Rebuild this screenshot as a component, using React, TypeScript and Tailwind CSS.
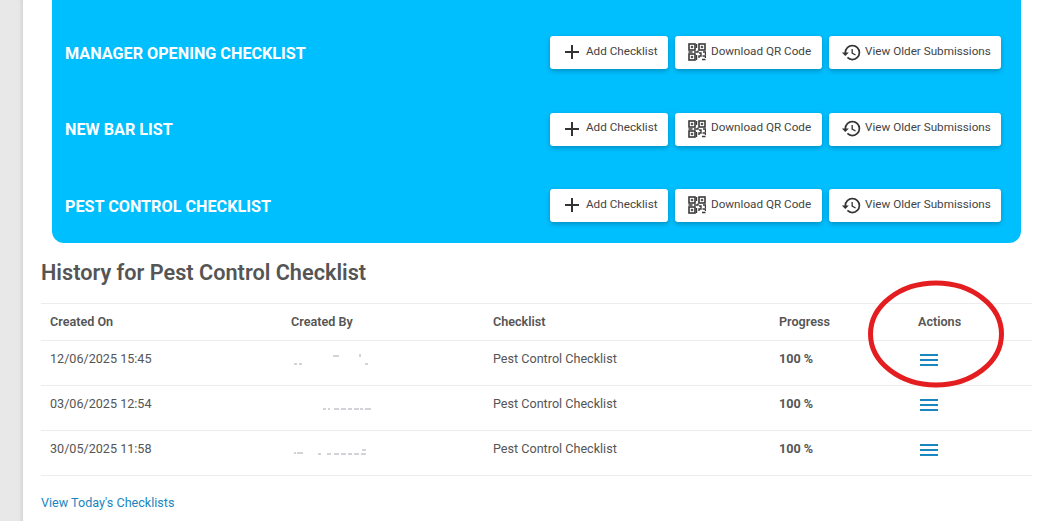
import { MdAdd, MdHistory, MdMenu } from "react-icons/md";

const checklists = ["Manager Opening Checklist", "New Bar List", "Pest Control Checklist"];

const rows = [
  { date: "12/06/2025 15:45", marks: ["M3 13h3M8 13h3M42 5h6M69 3v3M74 13h3"] },
  { date: "03/06/2025 12:54", marks: ["M32 13h3M37 13h2M43 13h5M50 13h5M57 13h4M63 13h5M69 13h3M74 13h6"] },
  { date: "30/05/2025 11:58", marks: ["M3 12h2M6 12h6M27 13h3M36 13h4M43 13h5M50 13h5M57 13h4M63 13h5M71 9h4M70 13h5"] },
];

const QrIcon = () => (
  <svg width="18" height="18" viewBox="0 0 18 18" fill="none" stroke="#3a3a3a" className="shrink-0">
    <rect x="1" y="1" width="6" height="6" strokeWidth="1.6" />
    <rect x="11" y="1" width="6" height="6" strokeWidth="1.6" />
    <rect x="1" y="11" width="6" height="6" strokeWidth="1.6" />
    <path d="M3 3.2h2v1.6H3zM13 3.2h2v1.6h-2zM3 13.2h2v1.6H3z" fill="#3a3a3a" strokeWidth="0.4" />
    <path d="M0.5 9h4M6 9h4v-1.5M8.5 1v4M8.5 12v5M11 10h2v3h-2v2M15 9h2.5v3M14.5 13h3v2M14 16.5h3.5" strokeWidth="1.4" />
  </svg>
);

const ActionButton = ({ icon, label, className }: { icon: React.ReactNode; label: string; className: string }) => (
  <button
    type="button"
    className={`flex h-[33px] items-center rounded-[3px] bg-white pb-[1px] text-[11.7px] text-[#444] shadow-[0_2px_5px_rgba(0,0,0,0.25)] ${className}`}
  >
    {icon}
    <span className="pb-[1px]">{label}</span>
  </button>
);

export default function App() {
  return (
    <div className="relative flex h-[521px] w-[1045px] overflow-hidden bg-white font-['Roboto',sans-serif]">
      <div className="w-[23px] shrink-0 bg-[#e8e8e8] shadow-[inset_-4px_0_4px_-3px_rgba(0,0,0,0.12)]" />

      <main className="min-w-0 flex-1 pl-[18px] pr-[13px]">
        <section className="ml-[11px] mr-[11px] flex flex-col gap-[43.5px] rounded-b-[12px] bg-[#00bfff] pb-[21px] pl-[13px] pr-[20px] pt-[36px]">
          {checklists.map((name) => (
            <div key={name} className="flex items-center justify-between">
              <h2 className="pt-[3px] text-[16.2px] font-bold uppercase text-white">{name}</h2>
              <div className="flex gap-[7px]">
                <ActionButton
                  className="w-[118px] pl-[10px]"
                  icon={<MdAdd size={24} className="mr-[2px] text-[#333]" />}
                  label="Add Checklist"
                />
                <ActionButton
                  className="w-[147px] pl-[13px]"
                  icon={<span className="mr-[5px]"><QrIcon /></span>}
                  label="Download QR Code"
                />
                <ActionButton
                  className="w-[172px] pl-[12px]"
                  icon={<MdHistory size={21} className="mr-[3px] text-[#333]" />}
                  label="View Older Submissions"
                />
              </div>
            </div>
          ))}
        </section>

        <h1 className="mt-[16px] text-[21.7px] font-semibold leading-[28px] text-[#555]">History for Pest Control Checklist</h1>

        <table className="mt-[16px] w-[991px] table-fixed border-collapse border-y border-[#ececec] text-left text-[12.6px] text-[#555]">
          <colgroup>
            <col className="w-[241px]" />
            <col className="w-[202px]" />
            <col className="w-[286px]" />
            <col className="w-[139px]" />
            <col className="w-[123px]" />
          </colgroup>
          <thead>
            <tr className="h-[37px] border-b border-[#ececec]">
              <th className="pl-[9px] font-semibold">Created On</th>
              <th className="pl-[9px] font-semibold">Created By</th>
              <th className="pl-[9px] font-semibold">Checklist</th>
              <th className="pl-[9px] font-semibold">Progress</th>
              <th className="pl-[9px] font-semibold">Actions</th>
            </tr>
          </thead>
          <tbody>
            {rows.map((row) => (
              <tr key={row.date} className="h-[45px] border-b border-[#ececec]">
                <td className="pb-[7px] pl-[9px] align-middle">{row.date}</td>
                <td className="pb-[7px] pl-[9px] align-middle">
                  <svg width="84" height="18" viewBox="0 0 84 18" stroke="#a4a9ae" strokeWidth="1" fill="none">
                    {row.marks.map((d) => (
                      <path key={d} d={d} />
                    ))}
                  </svg>
                </td>
                <td className="pb-[7px] pl-[9px] align-middle">Pest Control Checklist</td>
                <td className="pb-[7px] pl-[9px] align-middle font-bold">100 %</td>
                <td className="pb-[6px] pl-[8px] align-middle">
                  <MdMenu size={24} className="block text-[#1a86c0]" />
                </td>
              </tr>
            ))}
          </tbody>
        </table>

        <a href="#" className="mt-[18px] block text-[12.6px] text-[#1a86c0]">
          View Today's Checklists
        </a>
      </main>

      <svg width="140" height="112" viewBox="0 0 140 112" fill="none" className="absolute left-[866px] top-[278px]">
        <ellipse cx="70" cy="56" rx="65.5" ry="51" stroke="#e41e20" strokeWidth="5" />
      </svg>
    </div>
  );
}
